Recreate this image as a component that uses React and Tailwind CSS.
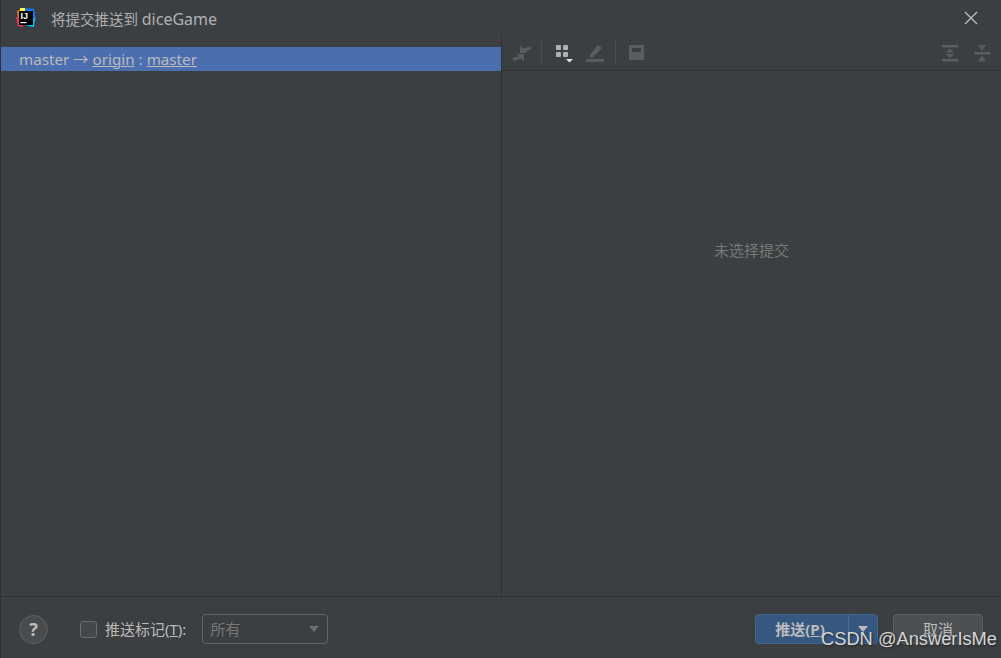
import React from "react";

const font = { fontFamily: '"Noto Sans", "Noto Sans CJK SC", sans-serif' };

function Logo() {
  return (
    <svg width="20" height="20" viewBox="0 0 20 20">
      <path d="M1 3 L9 0 L9 8 L2 10 Z" fill="#f97a12" />
      <path d="M0 9 L6 10 L7 19 L2 18 Z" fill="#fe315d" />
      <path d="M8 0 L18 1 L20 12 L12 8 Z" fill="#087cfa" />
      <path d="M3 12 L12 18 L18 19 L19 10 Z" fill="#07c3f2" />
      <path d="M4 0 L9 0 L9 6 L4 6 Z" fill="#fcf84a" />
      <rect x="3" y="3" width="14" height="14" fill="#000" />
      <text x="4.5" y="11" fontSize="9" fontWeight="700" fill="#fff" fontFamily="Liberation Sans">IJ</text>
      <rect x="4.5" y="14" width="6" height="1.2" fill="#fff" />
    </svg>
  );
}

function Divider() {
  return <div className="h-6 w-px bg-[#4d5052]" />;
}

function Toolbar() {
  return (
    <div className="flex h-[35px] items-center border-b border-[#323232] pl-[10px] pr-[10px]">
      <svg width="20" height="20" viewBox="0 0 20 20">
        <path d="M8 2.5V10h7z M12 18.5V11H5z" fill="#5a5c5e" />
        <path d="M11 7L19 5M9 14L1 16.5" stroke="#5a5c5e" strokeWidth="3" />
      </svg>
      <div className="ml-[9px]"><Divider /></div>
      <svg width="20" height="22" viewBox="0 0 20 22" className="ml-[12px]">
        <rect x="2" y="3" width="5" height="5" rx="1" fill="#afb1b3" />
        <rect x="9" y="3" width="5" height="5" rx="1" fill="#afb1b3" />
        <rect x="2" y="10" width="5" height="5" rx="1" fill="#afb1b3" />
        <rect x="9" y="10" width="5" height="5" rx="1" fill="#afb1b3" />
        <path d="M12 17h7l-3.5 3.5z" fill="#dfe1e3" />
      </svg>
      <svg width="20" height="20" viewBox="0 0 20 20" className="ml-[12px]">
        <path d="M4 12 L12 2 L16 5 L7 14 L4 15z" fill="#5a5c5e" />
        <rect x="0" y="16" width="18" height="3" fill="#5a5c5e" />
      </svg>
      <div className="ml-[9px]"><Divider /></div>
      <svg width="18" height="18" viewBox="0 0 18 18" className="ml-[12px]">
        <path d="M1 1h15v15H1z M4 4v4h9V4z" fill="#5a5c5e" fillRule="evenodd" />
      </svg>
      <div className="flex-1" />
      <svg width="18" height="18" viewBox="0 0 18 18">
        <rect x="1" y="1" width="16" height="2.5" fill="#5a5c5e" />
        <rect x="1" y="15" width="16" height="2.5" fill="#5a5c5e" />
        <path d="M9 4.5l4.5 4h-9z M9 14l4.5-4h-9z" fill="#5a5c5e" />
      </svg>
      <svg width="18" height="18" viewBox="0 0 18 18" className="ml-[14px]">
        <rect x="1" y="8" width="16" height="2.5" fill="#5a5c5e" />
        <path d="M9 7L5 1h8z M9 11.5l4 6H5z" fill="#5a5c5e" />
      </svg>
    </div>
  );
}

export default function App() {
  return (
    <div className="relative flex h-[658px] w-[1001px] flex-col overflow-hidden border-l border-[#2f3133] bg-[#3c3f41]" style={font}>
      {/* title bar */}
      <div className="flex h-[36px] shrink-0 items-center pl-[15px] pr-[22px] text-[14.5px] text-[#afb1b3]">
        <Logo />
        <span className="ml-[15px] pt-[1px]">将提交推送到 <span className="text-[16px]">diceGame</span></span>
        <div className="flex-1" />
        <svg width="16" height="16" viewBox="0 0 16 16" stroke="#bcbec0" strokeWidth="1.3">
          <path d="M2 2L14 14M14 2L2 14" />
        </svg>
      </div>

      <div className="flex min-h-0 flex-1 border-b border-[#323232]">
        {/* commits tree */}
        <div className="w-[501px] shrink-0 border-r border-[#323232] pt-[11px]">
          <div className="flex h-[24px] items-center bg-[#4b6eaf] pl-[18px] text-[15.2px] text-[#bbbbbb]">
            <span>master</span>
            <span className="mx-[4px]">→</span>
            <span className="underline">origin</span>
            <span className="mx-[4px]">:</span>
            <span className="underline">master</span>
          </div>
        </div>
        {/* details */}
        <div className="flex min-w-0 flex-1 flex-col">
          <Toolbar />
          <div className="flex flex-1 items-center justify-center pb-[166px] text-[15px] text-[#787878]">
            未选择提交
          </div>
        </div>
      </div>

      {/* footer */}
      <div className="flex h-[61px] shrink-0 items-center pl-[18px] pr-[18px] pt-[3px]">
        <div className="flex h-[29px] w-[29px] items-center justify-center rounded-full border border-[#5e6060] bg-[#494c4e] text-[18px] font-bold text-[#bbbbbb]">?</div>
        <div className="ml-[32px] h-[17px] w-[17px] rounded-[3px] border border-[#6b6b6b] bg-[#43494a]" />
        <span className="ml-[8px] text-[15px] text-[#bbbbbb]">
          推送标记(<span className="underline">T</span>):
        </span>
        <div className="ml-[16px] flex h-[30px] w-[126px] items-center justify-between rounded-[4px] border border-[#646464] pl-[7px] pr-[8px] text-[15px] text-[#787878]">
          <span>所有</span>
          <span className="h-0 w-0 border-x-[5.5px] border-t-[6px] border-x-transparent border-t-[#6e6e6e]" />
        </div>
        <div className="flex-1" />
        <div className="flex h-[30px] w-[123px] items-center rounded-[4px] border border-[#43688c] bg-[#365880] text-[15px] font-bold text-[#bbbbbb]">
          <span className="flex h-full w-[93px] items-center justify-center border-r border-[#4b6f93] pr-[4px]">
            推送(<span className="underline">P</span>)
          </span>
          <span className="flex flex-1 items-center justify-center">
            <span className="h-0 w-0 border-x-[5.5px] border-t-[6px] border-x-transparent border-t-[#bbbbbb]" />
          </span>
        </div>
        <div className="ml-[15px] flex h-[30px] w-[90px] items-center justify-center rounded-[4px] border border-[#5e6060] bg-[#4c5052] text-[15px] text-[#bbbbbb]">
          取消
        </div>
      </div>

      {/* watermark */}
      <div className="absolute left-[820px] top-[629px] text-[18.3px] leading-[20px] text-[#d4d6d8] [font-family:'Liberation_Sans'] [text-shadow:1px_1px_2px_#222]">
        CSDN @AnswerIsMe
      </div>
    </div>
  );
}
